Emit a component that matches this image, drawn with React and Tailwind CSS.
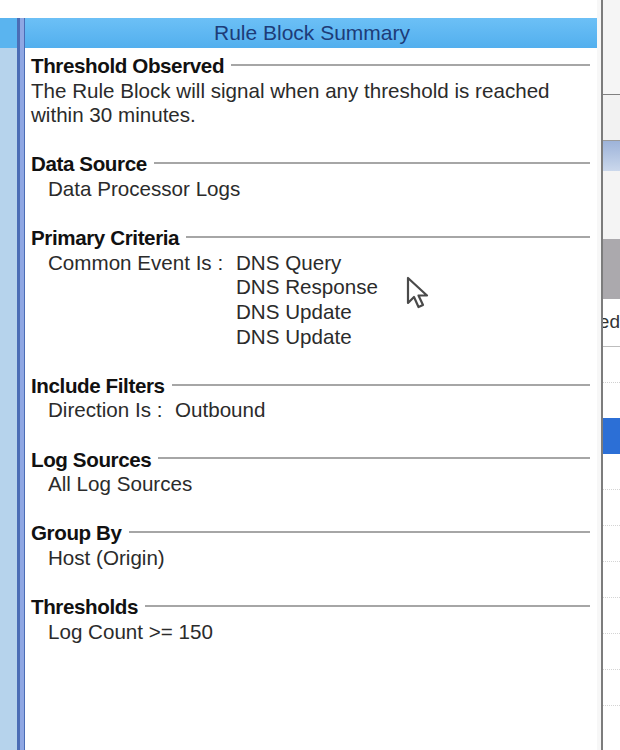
import React from 'react';

const sections = [
  { title: 'Threshold Observed', plain: ['The Rule Block will signal when any threshold is reached', 'within 30 minutes.'] },
  { title: 'Data Source', items: ['Data Processor Logs'] },
  { title: 'Primary Criteria', label: 'Common Event Is :', labelW: 'w-[188px]', values: ['DNS Query', 'DNS Response', 'DNS Update', 'DNS Update'] },
  { title: 'Include Filters', label: 'Direction Is :', labelW: 'w-[127px]', values: ['Outbound'] },
  { title: 'Log Sources', items: ['All Log Sources'] },
  { title: 'Group By', items: ['Host (Origin)'] },
  { title: 'Thresholds', items: ['Log Count >= 150'] },
];

const Section = ({ s }) => (
  <div className="mb-[24.6px]">
    <div className="flex items-center h-[24.6px]">
      <span className="font-bold text-[#111] tracking-[-0.4px]">{s.title}</span>
      <div className="flex-1 h-[2px] bg-[#a6a6a6] ml-[7px] mr-[7px] mt-[-3px]" />
    </div>

    {s.plain && s.plain.map((t, i) => (
      <div key={i} className="h-[24.6px] whitespace-nowrap">{t}</div>
    ))}

    {s.items && s.items.map((t, i) => (
      <div key={i} className="h-[24.6px] pl-[17px]">{t}</div>
    ))}

    {s.values && (
      <div className="flex pl-[17px]">
        <div className={s.labelW}>{s.label}</div>
        <div>
          {s.values.map((v, i) => (
            <div key={i} className="h-[24.6px]">{v}</div>
          ))}
        </div>
      </div>
    )}
  </div>
);

// the mouse pointer sitting over the panel
const Cursor = () => (
  <svg className="absolute left-[406px] top-[276px]" width="26" height="36" viewBox="0 0 26 36">
    <path d="M2 2 L2 27 L8 21 L12.5 31 L17 29 L12.5 19.5 L21 19.5 Z" fill="#fff" stroke="#4a4a4a" strokeWidth="2.2" strokeLinejoin="round" />
  </svg>
);

export default function App() {
  return (
    <div className="relative w-[620px] h-[750px] bg-white flex overflow-hidden font-['Liberation_Sans',Arial,sans-serif] text-[20.6px] leading-[24.6px] text-[#2b2b2b]">
      {/* left window strip */}
      <div className="w-[17px] shrink-0 flex flex-col">
        <div className="h-[18px] bg-white" />
        <div className="h-[30px] bg-[#5ab4ef]" />
        <div className="flex-1 bg-[#b6d3ec]" />
      </div>

      {/* splitter border */}
      <div className="shrink-0 flex flex-col">
        <div className="h-[18px] bg-white" />
        <div className="flex-1 flex">
          <div className="w-[3px] bg-[#4b6db5]" />
          <div className="w-[4px] bg-[#8fa7e3]" />
          <div className="w-[1px] bg-[#4b6db5]" />
        </div>
      </div>

      {/* summary panel */}
      <div className="w-[572px] shrink-0 flex flex-col">
        <div className="h-[18px] bg-white" />
        <div className="h-[30px] bg-gradient-to-b from-[#6cc0f6] to-[#52afee] flex items-center justify-center text-[#1d3c78] text-[21px] pl-[2px]">
          Rule Block Summary
        </div>
        <div className="flex-1 pl-[6px] pt-[6px]">
          {sections.map((s) => (
            <Section key={s.title} s={s} />
          ))}
        </div>
      </div>

      <div className="w-[4px] shrink-0 bg-[#f7f7f7]" />
      <div className="w-[2px] shrink-0 bg-[#7c7c7c]" />

      {/* neighbouring window, cut off at the edge */}
      <div className="flex-1 min-w-0 overflow-hidden flex flex-col">
        <div className="h-[95px] bg-[#f5f5f5] border-b border-[#808080]" />
        <div className="h-[46px] bg-[#f2f2f2] border-b border-[#9a9a9a]" />
        <div className="h-[30px] bg-gradient-to-b from-[#9db3d9] to-[#cbd8ec]" />
        <div className="h-[68px] bg-[#f4f4f4]" />
        <div className="h-[60px] bg-[#aba9ad]" />
        <div className="h-[48px] bg-white border-b border-[#bdbdbd] flex items-center justify-end text-[19px] text-[#333] whitespace-nowrap overflow-hidden">
          ed
        </div>
        <div className="h-[36px] bg-white border-b border-dotted border-[#d0d0d0]" />
        <div className="h-[35px] bg-white" />
        <div className="h-[36px] bg-[#2c6fd6]" />
        <div className="h-[36px] border-b border-dotted border-[#d4d4d4]" />
        <div className="h-[36px] border-b border-dotted border-[#d4d4d4]" />
        <div className="h-[36px] border-b border-dotted border-[#d4d4d4]" />
        <div className="h-[36px] border-b border-dotted border-[#d4d4d4]" />
        <div className="h-[36px] border-b border-dotted border-[#d4d4d4]" />
        <div className="h-[36px] border-b border-dotted border-[#d4d4d4]" />
        <div className="h-[36px] border-b border-dotted border-[#d4d4d4]" />
        <div className="flex-1" />
      </div>

      <Cursor />
    </div>
  );
}
